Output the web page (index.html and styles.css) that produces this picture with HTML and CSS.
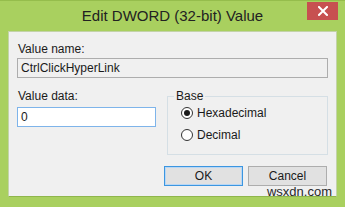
FILE: index.html
```html
<!DOCTYPE html>
<html lang="en">
<head>
    <meta charset="UTF-8">
    <meta name="viewport" content="width=device-width, initial-scale=1.0">
    <title>Edit DWORD (32-bit) Value</title>
    <link rel="stylesheet" href="styles.css">
</head>
<body>

<div class="frame">
    <div class="titlebar">
        <span class="spacer"></span>
        <span class="title">Edit DWORD (32-bit) Value</span>
        <button class="close" type="button">
            <svg width="10" height="10" viewBox="0 0 10 10">
                <path d="M1 1 L9 9 M9 1 L1 9" stroke="#fff" stroke-width="2" stroke-linecap="square"/>
            </svg>
        </button>
    </div>

    <div class="client">
        <div class="label">Value name:</div>
        <div class="field readonly">CtrlClickHyperLink</div>

        <div class="row">
            <div class="data">
                <div class="label">Value data:</div>
                <div class="field edit">0</div>
            </div>
            <fieldset class="base">
                <legend>Base</legend>
                <div class="radio"><span class="dot checked"></span>Hexadecimal</div>
                <div class="radio"><span class="dot"></span>Decimal</div>
            </fieldset>
        </div>

        <div class="buttons">
            <button type="button" class="btn default">OK</button>
            <button type="button" class="btn">Cancel</button>
        </div>
    </div>

    <div class="watermark">wsxdn.com</div>
</div>

</body>
</html>
```

FILE: styles.css
```css
html, body {
    margin: 0;
    padding: 0;
}
body {
    width: 345px;
    height: 207px;
    overflow: hidden;
    font-family: "Liberation Sans", Arial, sans-serif;
    font-size: 12px;
    color: #1a1a1a;
    background-color: #a9d05f;
}
.frame {
    position: relative;
    height: 207px;
    box-sizing: border-box;
    border-top: 1px solid #95bd4c;
}
.titlebar {
    display: flex;
    align-items: flex-start;
    height: 30px;
}
.spacer {
    width: 38px;
}
.title {
    flex: 1;
    text-align: center;
    font-size: 15px;
    line-height: 30px;
    color: #222;
}
.close {
    width: 31px;
    height: 18px;
    margin: 1px 7px 0 0;
    padding: 0;
    border: none;
    background-color: #c75050;
    display: flex;
    align-items: center;
    justify-content: center;
}
.client {
    margin: 0 8px;
    height: 166px;
    box-sizing: border-box;
    border: 1px solid #c3d3a8;
    border-bottom-color: #8fb64b;
    background-color: #f0f0f0;
    padding: 10px 8px 0 8px;
}
.label {
    line-height: 15px;
    padding-left: 1px;
}
.field {
    height: 20px;
    box-sizing: border-box;
    line-height: 18px;
    padding-left: 3px;
    margin-top: 1px;
}
.readonly {
    background-color: #f0f0f0;
    border: 1px solid #adadad;
}
.edit {
    margin-top: 3px;
    background-color: #fff;
    border: 1px solid #7eb4ea;
}
.row {
    display: grid;
    grid-template-columns: 139px 161px;
    column-gap: 11px;
    margin-top: 11px;
}
.base {
    margin: 0;
    padding: 0 8px 5px 6px;
    border: 1px solid #d5dfe5;
    height: 66px;
    box-sizing: border-box;
}
.base legend {
    padding: 0 2px;
    line-height: 15px;
}
.radio {
    display: flex;
    align-items: center;
    height: 22px;
    padding-left: 7px;
    margin-top: -2px;
}
.radio + .radio {
    margin-top: 0;
}
.dot {
    width: 12px;
    height: 12px;
    box-sizing: border-box;
    border: 1px solid #333;
    border-radius: 50%;
    background: #fff;
    margin-right: 4px;
    display: flex;
    align-items: center;
    justify-content: center;
}
.dot.checked::after {
    content: "";
    width: 6px;
    height: 6px;
    border-radius: 50%;
    background: #1a1a1a;
}
.buttons {
    display: flex;
    justify-content: flex-end;
    gap: 5px;
    margin-top: 11px;
    padding-right: 1px;
}
.btn {
    width: 79px;
    height: 20px;
    padding: 0;
    border: 1px solid #adadad;
    background-color: #e1e1e1;
    font-family: "Liberation Sans", Arial, sans-serif;
    font-size: 12px;
    color: #1a1a1a;
}
.btn.default {
    border-color: #3c96e0;
    box-shadow: inset 0 0 0 1px #b8d7f5;
}
.watermark {
    position: absolute;
    right: 13px;
    bottom: 8px;
    font-size: 13px;
    line-height: 14px;
    color: #2a2a2a;
}
```
